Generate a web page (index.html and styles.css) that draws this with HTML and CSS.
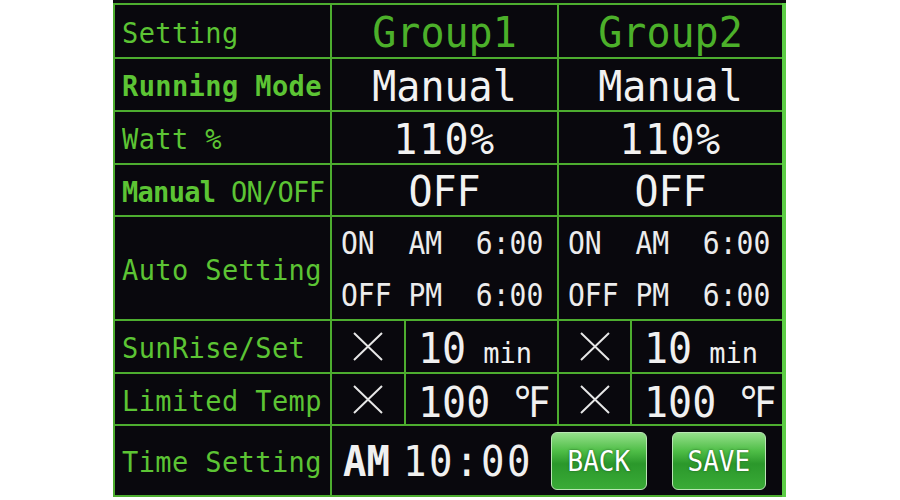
FILE: index.html
```html
<!DOCTYPE html>
<html lang="en">

<head>
    <meta charset="UTF-8">
    <title>Group Setting</title>
    <link rel="stylesheet" href="styles.css">
</head>

<body>
    <div class="screen">
        <div class="grid">
            <!-- header -->
            <div class="cell label"><span class="tx">Setting</span></div>
            <div class="cell head span2"><span class="tx">Group1</span></div>
            <div class="cell head span2"><span class="tx">Group2</span></div>

            <div class="cell label"><span class="tx bold">Running Mode</span></div>
            <div class="cell value span2"><span class="tx">Manual</span></div>
            <div class="cell value span2"><span class="tx">Manual</span></div>

            <div class="cell label"><span class="tx">Watt %</span></div>
            <div class="cell value span2"><span class="tx wide">110%</span></div>
            <div class="cell value span2"><span class="tx wide">110%</span></div>

            <div class="cell label"><span class="tx tight"><b>Manual</b> ON/OFF</span></div>
            <div class="cell value span2"><span class="tx">OFF</span></div>
            <div class="cell value span2"><span class="tx">OFF</span></div>

            <!-- auto on / off times -->
            <div class="cell label"><span class="tx">Auto Setting</span></div>
            <div class="cell auto span2">
                <span class="tx">ON  AM  6:00</span>
                <span class="tx">OFF PM  6:00</span>
            </div>
            <div class="cell auto span2">
                <span class="tx">ON  AM  6:00</span>
                <span class="tx">OFF PM  6:00</span>
            </div>

            <div class="cell label"><span class="tx">SunRise/Set</span></div>
            <div class="cell mark">
                <svg width="34" height="31" viewBox="0 0 34 31"><path d="M3 2 L31 29 M31 2 L3 29" stroke="#e6e6e6" stroke-width="2" fill="none"/></svg>
            </div>
            <div class="cell amount"><span class="tx">10<small>min</small></span></div>
            <div class="cell mark">
                <svg width="34" height="31" viewBox="0 0 34 31"><path d="M3 2 L31 29 M31 2 L3 29" stroke="#e6e6e6" stroke-width="2" fill="none"/></svg>
            </div>
            <div class="cell amount"><span class="tx">10<small>min</small></span></div>

            <div class="cell label"><span class="tx">Limited Temp</span></div>
            <div class="cell mark">
                <svg width="34" height="31" viewBox="0 0 34 31"><path d="M3 2 L31 29 M31 2 L3 29" stroke="#e6e6e6" stroke-width="2" fill="none"/></svg>
            </div>
            <div class="cell amount"><span class="tx">100 ℉</span></div>
            <div class="cell mark">
                <svg width="34" height="31" viewBox="0 0 34 31"><path d="M3 2 L31 29 M31 2 L3 29" stroke="#e6e6e6" stroke-width="2" fill="none"/></svg>
            </div>
            <div class="cell amount"><span class="tx">100 ℉</span></div>

            <!-- clock and buttons -->
            <div class="cell label"><span class="tx">Time Setting</span></div>
            <div class="cell clock span4">
                <span class="tx"><b>AM</b><span class="time">10:00</span></span>
                <button class="btn"><span class="tx">BACK</span></button>
                <button class="btn"><span class="tx">SAVE</span></button>
            </div>
        </div>
    </div>
</body>

</html>
```

FILE: styles.css
```css
body {
    margin: 0;
    background: #ffffff;
    font-family: "DejaVu Sans Mono", monospace;
}

.screen {
    margin-left: 113px;
    width: 673px;
    border-top: 3px solid #0c0b10;
}

.grid {
    display: grid;
    grid-template-columns: 215px 72px 151px 71px 150px;
    grid-template-rows: 52px 51px 51px 50px 102px 51px 50px 69px;
    gap: 2px;
    padding: 2px 0 2px 2px;
    background: #4dad2f;
    border-right: 4px solid #5ccd45;
}

.cell {
    background: #09080d;
    display: flex;
    align-items: center;
    padding-top: 2px;
    box-sizing: border-box;
}

.span2 {
    grid-column: span 2;
}

.span4 {
    grid-column: span 4;
}

/* the panel font is a little taller than DejaVu */
.tx {
    display: inline-block;
    white-space: pre;
    transform: scaleY(1.08);
}

.label {
    color: #5cc434;
    font-size: 27px;
    letter-spacing: 0.4px;
    padding-left: 7px;
}

.bold,
.label b {
    font-weight: bold;
}

.tight {
    letter-spacing: -0.7px;
}

.head {
    justify-content: center;
    color: #4cb02a;
    font-size: 40px;
}

.value {
    justify-content: center;
    color: #f2f2f2;
    font-size: 40px;
}

.wide {
    letter-spacing: 1.5px;
}

.auto {
    flex-direction: column;
    align-items: flex-start;
    justify-content: center;
    gap: 20px;
    padding: 3px 0 0 9px;
    color: #ececec;
    font-size: 28px;
}

.auto .tx {
    line-height: 32px;
    transform: scaleY(1.12);
}

.mark {
    justify-content: center;
    padding-top: 0;
}

.amount {
    color: #f0f0f0;
    font-size: 40px;
    padding-left: 12px;
}

.amount small {
    font-size: 27px;
    margin-left: 17px;
}

.clock {
    color: #f0f0f0;
    font-size: 39px;
    padding-left: 11px;
    padding-top: 2px;
}

.clock b {
    font-weight: bold;
}

.clock .time {
    margin-left: 13px;
    letter-spacing: 2.5px;
}

.btn {
    margin-left: 18px;
    margin-top: -2px;
    width: 96px;
    height: 58px;
    border: 1px solid #b9e6b4;
    border-radius: 6px;
    background: linear-gradient(#95df8b 0%, #4fbe47 32%, #2b982b 55%, #3aab37 100%);
    color: #ffffff;
    font-family: "DejaVu Sans Mono", monospace;
    font-size: 26px;
    text-shadow: 0 0 2px #1f5a1f;
    padding: 0;
}

.btn + .btn {
    margin-left: 25px;
    width: 94px;
}

.btn .tx {
    transform: scaleY(1.12);
}
```
